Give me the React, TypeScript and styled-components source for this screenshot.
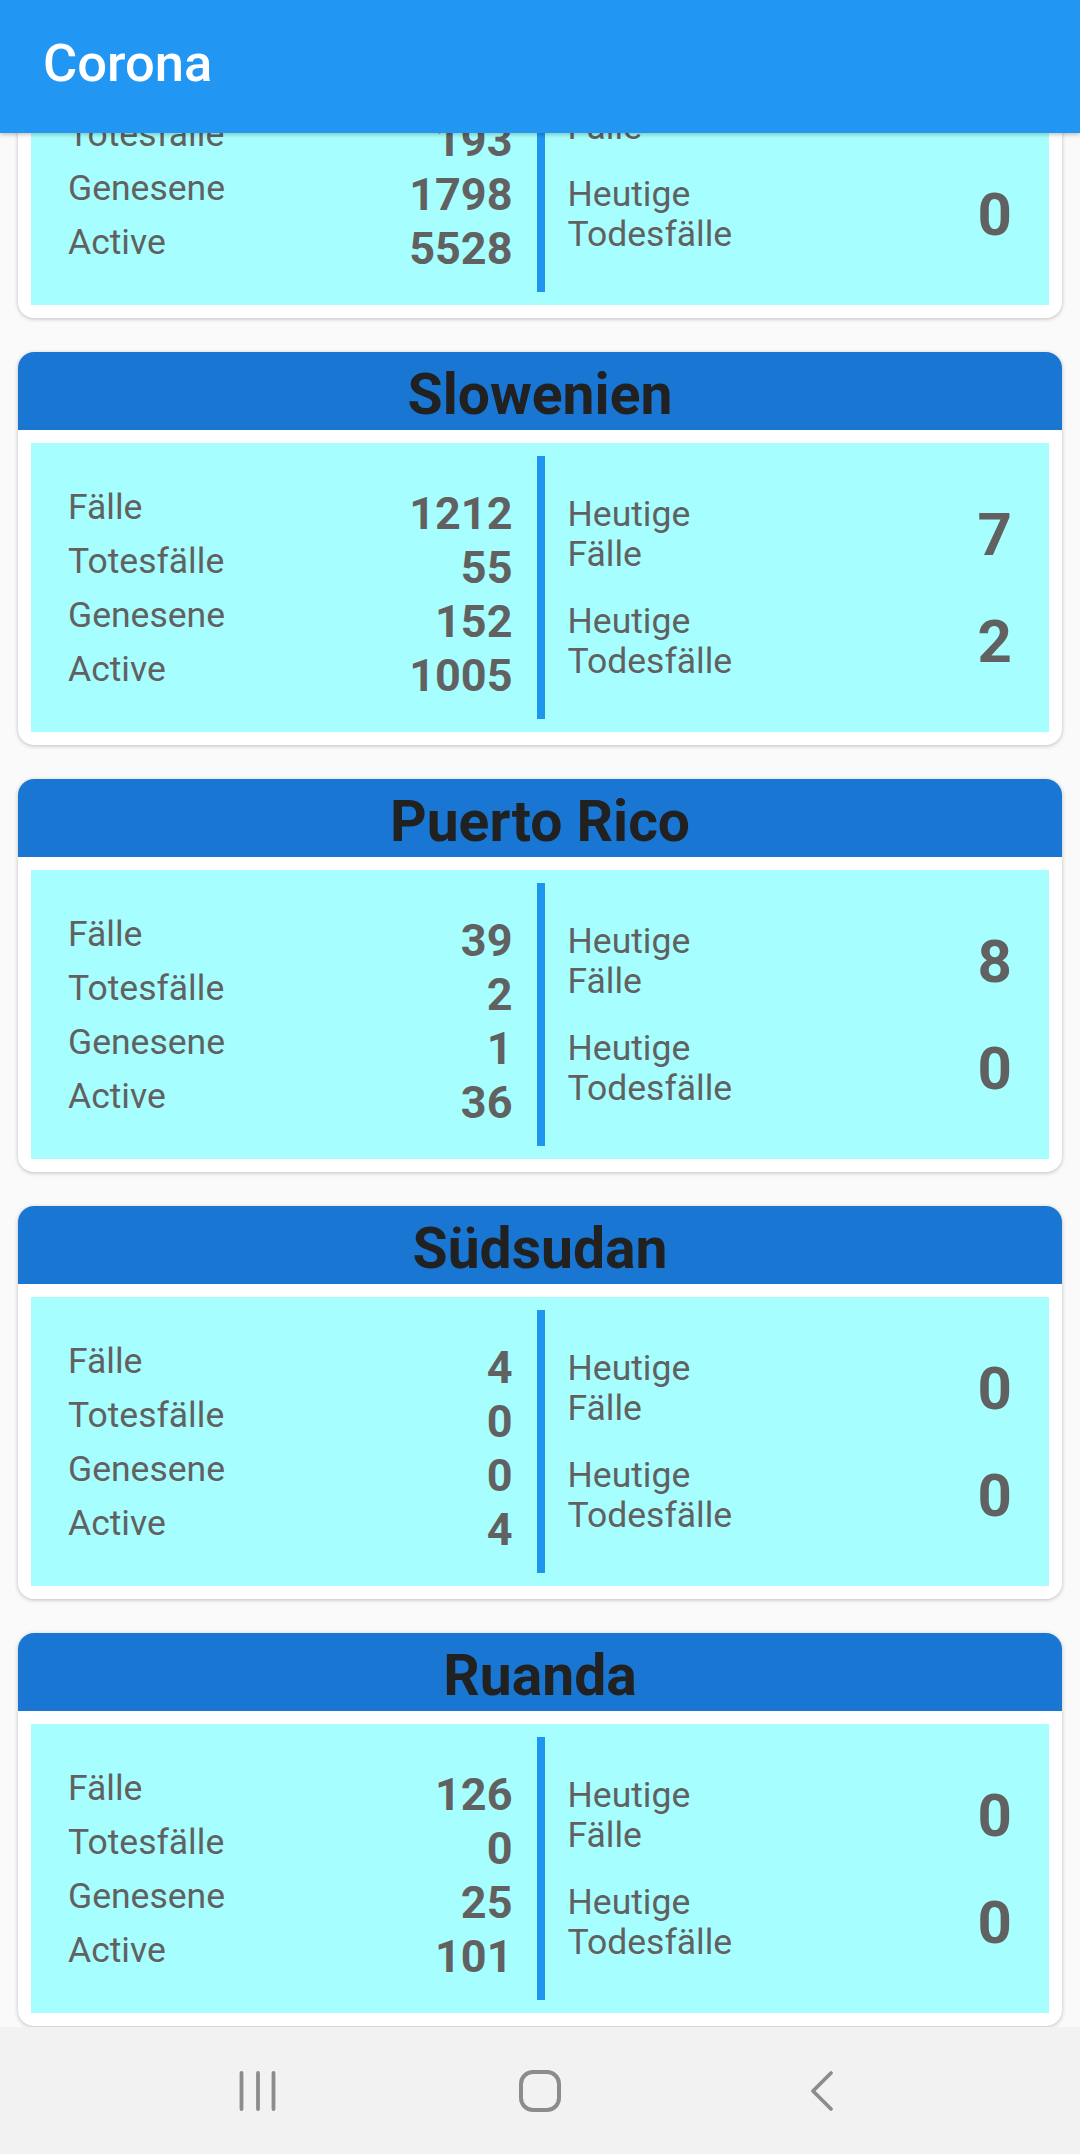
import React from "react";
import styled, { createGlobalStyle } from "styled-components";

const GlobalStyle = createGlobalStyle`
  html, body {
    margin: 0;
    padding: 0;
  }
  body {
    font-family: Roboto, "Noto Sans", "Liberation Sans", sans-serif;
    background: #fafafa;
  }
  * { box-sizing: border-box; }
`;

const Page = styled.div`
  width: 1080px;
  height: 2154px;
  display: flex;
  flex-direction: column;
  background: #fafafa;
  overflow: hidden;
`;

const AppBar = styled.header`
  flex: none;
  height: 133px;
  position: relative;
  z-index: 2;
  display: flex;
  align-items: center;
  padding: 0 0 8px 43px;
  background: #2196f3;
  box-shadow: 0 2px 4px rgba(0, 0, 0, 0.22);
`;

const AppTitle = styled.h1`
  margin: 0;
  font-size: 52.5px;
  font-weight: 500;
  color: #ffffff;
  line-height: normal;
`;

const List = styled.main`
  flex: 1;
  overflow: hidden;
  position: relative;
  z-index: 1;
`;

const ScrollContent = styled.div<{ $offset: number }>`
  display: flex;
  flex-direction: column;
  gap: 34px;
  padding: 0 18px;
  margin-top: ${(p) => -p.$offset}px;
`;

const Card = styled.section`
  height: 393px;
  background: #ffffff;
  border-radius: 16px;
  overflow: hidden;
  box-shadow: 0 1px 4px rgba(0, 0, 0, 0.24);
  display: flex;
  flex-direction: column;
`;

const CardHeader = styled.div`
  flex: none;
  height: 78px;
  background: #1976d2;
  display: flex;
  align-items: center;
  justify-content: center;
  padding-top: 6px;
`;

const CountryName = styled.h2`
  margin: 0;
  font-size: 57px;
  font-weight: 700;
  color: #212121;
  line-height: normal;
`;

const CardBody = styled.div`
  flex: 1;
  padding: 13px;
  display: flex;
`;

const StatsBox = styled.div`
  flex: 1;
  background: #a6fffe;
  padding: 13px;
  display: flex;
`;

const TotalsColumn = styled.div`
  flex: 1;
  display: flex;
  flex-direction: column;
  justify-content: center;
  padding: 14px 24px 0 24px;
`;

const Divider = styled.div`
  flex: none;
  width: 8px;
  background: #1e96f0;
`;

const TodayColumn = styled.div`
  flex: 1;
  display: flex;
  flex-direction: column;
  justify-content: center;
  gap: 27px;
  padding: 0 24px 0 23px;
`;

const StatRow = styled.div`
  display: flex;
  justify-content: space-between;
  align-items: flex-start;
  height: 54px;
`;

const Label = styled.span`
  font-size: 35.5px;
  line-height: 40px;
  color: #616161;
`;

const Value = styled.span`
  font-size: 45px;
  line-height: 54px;
  font-weight: 700;
  color: #616161;
`;

const TodayRow = styled.div`
  display: flex;
  justify-content: space-between;
  align-items: center;
`;

const TodayLabel = styled.span`
  font-size: 35.5px;
  line-height: 40px;
  color: #616161;
`;

const TodayValue = styled.span`
  font-size: 60px;
  font-weight: 700;
  line-height: normal;
  color: #616161;
`;

const NavBar = styled.nav`
  flex: none;
  height: 127px;
  background: #f2f2f2;
  display: flex;
  justify-content: center;
  align-items: center;
  gap: 182px;
  position: relative;
  z-index: 2;
`;

const NavSlot = styled.div`
  width: 100px;
  display: flex;
  justify-content: center;
  align-items: center;
`;

type Country = {
  name: string;
  cases: number;
  deaths: number;
  recovered: number;
  active: number;
  todayCases: number;
  todayDeaths: number;
};

const countries: Country[] = [
  { name: "Rumänien", cases: 7519, deaths: 193, recovered: 1798, active: 5528, todayCases: 0, todayDeaths: 0 },
  { name: "Slowenien", cases: 1212, deaths: 55, recovered: 152, active: 1005, todayCases: 7, todayDeaths: 2 },
  { name: "Puerto Rico", cases: 39, deaths: 2, recovered: 1, active: 36, todayCases: 8, todayDeaths: 0 },
  { name: "Südsudan", cases: 4, deaths: 0, recovered: 0, active: 4, todayCases: 0, todayDeaths: 0 },
  { name: "Ruanda", cases: 126, deaths: 0, recovered: 25, active: 101, todayCases: 0, todayDeaths: 0 },
];

const CountryCard: React.FC<{ c: Country }> = ({ c }) => (
  <Card>
    <CardHeader>
      <CountryName>{c.name}</CountryName>
    </CardHeader>
    <CardBody>
      <StatsBox>
        <TotalsColumn>
          <StatRow>
            <Label>Fälle</Label>
            <Value>{c.cases}</Value>
          </StatRow>
          <StatRow>
            <Label>Totesfälle</Label>
            <Value>{c.deaths}</Value>
          </StatRow>
          <StatRow>
            <Label>Genesene</Label>
            <Value>{c.recovered}</Value>
          </StatRow>
          <StatRow>
            <Label>Active</Label>
            <Value>{c.active}</Value>
          </StatRow>
        </TotalsColumn>
        <Divider />
        <TodayColumn>
          <TodayRow>
            <TodayLabel>
              Heutige
              <br />
              Fälle
            </TodayLabel>
            <TodayValue>{c.todayCases}</TodayValue>
          </TodayRow>
          <TodayRow>
            <TodayLabel>
              Heutige
              <br />
              Todesfälle
            </TodayLabel>
            <TodayValue>{c.todayDeaths}</TodayValue>
          </TodayRow>
        </TodayColumn>
      </StatsBox>
    </CardBody>
  </Card>
);

const iconColor = "#8c8c8c";

const RecentIcon = () => (
  <svg width="40" height="42" viewBox="0 0 40 42" fill="none">
    <g stroke={iconColor} strokeWidth="3.8" strokeLinecap="round">
      <line x1="3.5" y1="3" x2="3.5" y2="39" />
      <line x1="20" y1="3" x2="20" y2="39" />
      <line x1="35.5" y1="3" x2="35.5" y2="39" />
    </g>
  </svg>
);

const HomeIcon = () => (
  <svg width="42" height="42" viewBox="0 0 42 42" fill="none">
    <rect x="2" y="2" width="38" height="38" rx="12" stroke={iconColor} strokeWidth="4" />
  </svg>
);

const BackIcon = () => (
  <svg width="26" height="42" viewBox="0 0 26 42" fill="none">
    <path
      d="M22 3 L4 21 L22 39"
      stroke={iconColor}
      strokeWidth="3.8"
      strokeLinecap="round"
      strokeLinejoin="round"
    />
  </svg>
);

export default function App() {
  return (
    <>
      <GlobalStyle />
      <Page>
        <AppBar>
          <AppTitle>Corona</AppTitle>
        </AppBar>
        <List>
          <ScrollContent $offset={208}>
            {countries.map((c) => (
              <CountryCard key={c.name} c={c} />
            ))}
          </ScrollContent>
        </List>
        <NavBar>
          <NavSlot>
            <RecentIcon />
          </NavSlot>
          <NavSlot>
            <HomeIcon />
          </NavSlot>
          <NavSlot>
            <BackIcon />
          </NavSlot>
        </NavBar>
      </Page>
    </>
  );
}
